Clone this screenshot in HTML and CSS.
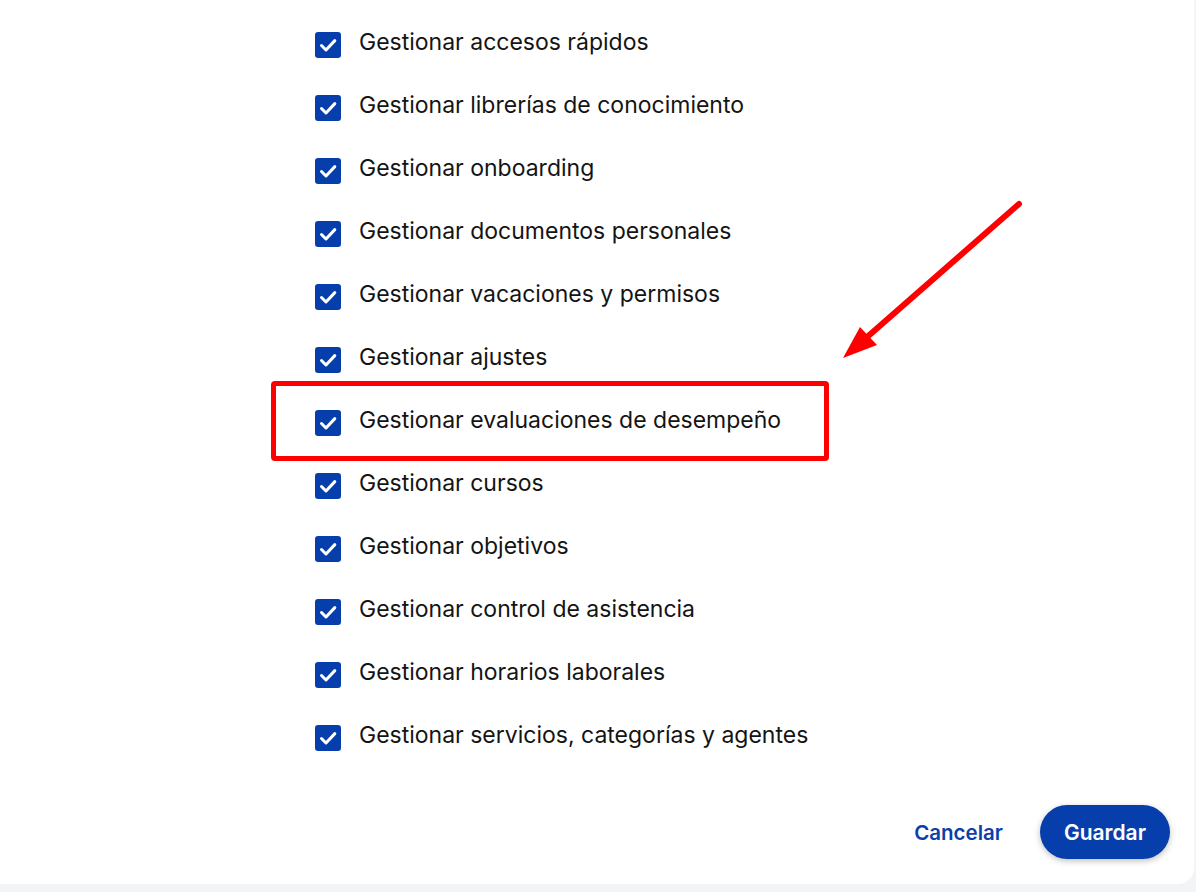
FILE: index.html
```html
<!DOCTYPE html>
<html lang="es">
<head>
    <meta charset="UTF-8">
    <meta name="viewport" content="width=device-width, initial-scale=1.0">
    <title>Permisos</title>
    <link rel="stylesheet" href="styles.css">
</head>
<body>
    <div class="panel">
        <ul class="perm-list">
            <li class="perm"><span class="check"><svg viewBox="0 0 26 26"><path d="M6.5 13.5 L11 18 L19.8 8.6"/></svg></span><span class="label">Gestionar accesos rápidos</span></li>
            <li class="perm"><span class="check"><svg viewBox="0 0 26 26"><path d="M6.5 13.5 L11 18 L19.8 8.6"/></svg></span><span class="label">Gestionar librerías de conocimiento</span></li>
            <li class="perm"><span class="check"><svg viewBox="0 0 26 26"><path d="M6.5 13.5 L11 18 L19.8 8.6"/></svg></span><span class="label">Gestionar onboarding</span></li>
            <li class="perm"><span class="check"><svg viewBox="0 0 26 26"><path d="M6.5 13.5 L11 18 L19.8 8.6"/></svg></span><span class="label">Gestionar documentos personales</span></li>
            <li class="perm"><span class="check"><svg viewBox="0 0 26 26"><path d="M6.5 13.5 L11 18 L19.8 8.6"/></svg></span><span class="label">Gestionar vacaciones y permisos</span></li>
            <li class="perm"><span class="check"><svg viewBox="0 0 26 26"><path d="M6.5 13.5 L11 18 L19.8 8.6"/></svg></span><span class="label">Gestionar ajustes</span></li>
            <li class="perm highlighted"><span class="check"><svg viewBox="0 0 26 26"><path d="M6.5 13.5 L11 18 L19.8 8.6"/></svg></span><span class="label">Gestionar evaluaciones de desempeño</span></li>
            <li class="perm"><span class="check"><svg viewBox="0 0 26 26"><path d="M6.5 13.5 L11 18 L19.8 8.6"/></svg></span><span class="label">Gestionar cursos</span></li>
            <li class="perm"><span class="check"><svg viewBox="0 0 26 26"><path d="M6.5 13.5 L11 18 L19.8 8.6"/></svg></span><span class="label">Gestionar objetivos</span></li>
            <li class="perm"><span class="check"><svg viewBox="0 0 26 26"><path d="M6.5 13.5 L11 18 L19.8 8.6"/></svg></span><span class="label">Gestionar control de asistencia</span></li>
            <li class="perm"><span class="check"><svg viewBox="0 0 26 26"><path d="M6.5 13.5 L11 18 L19.8 8.6"/></svg></span><span class="label">Gestionar horarios laborales</span></li>
            <li class="perm"><span class="check"><svg viewBox="0 0 26 26"><path d="M6.5 13.5 L11 18 L19.8 8.6"/></svg></span><span class="label">Gestionar servicios, categorías y agentes</span></li>
        </ul>
        <div class="actions">
            <button type="button" class="btn-text">Cancelar</button>
            <button type="button" class="btn-primary">Guardar</button>
        </div>
        <!-- annotation arrow -->
        <svg class="arrow" viewBox="0 0 210 180">
            <line x1="199" y1="14" x2="46" y2="148"/>
            <polygon points="23,168 40,137 57,155"/>
        </svg>
    </div>
</body>
</html>
```

FILE: styles.css
```css
body { margin: 0; background: #f3f4f6; font-family: Inter, "Noto Sans", sans-serif; }
.panel { position: relative; width: 1194px; height: 884px; background: #fff; border-bottom-right-radius: 16px; box-sizing: border-box; display: flex; flex-direction: column; }
.perm-list { list-style: none; margin: 0; padding: 13px 0 0 315px; }
.perm { position: relative; display: flex; align-items: center; height: 63px; font-size: 23px; color: #141414; }
.label { padding-bottom: 6px; }
.check { width: 26px; height: 26px; border-radius: 3px; background: #063fac; margin-right: 18px; display: flex; }
.check svg { width: 26px; height: 26px; fill: none; stroke: #fff; stroke-width: 3; stroke-linecap: round; stroke-linejoin: round; }
.highlighted::before { content: ""; position: absolute; left: -44px; top: -10px; width: 548px; height: 70px; border: 5px solid #ff0000; border-radius: 4px; }
.actions { margin-top: auto; display: flex; justify-content: flex-end; align-items: center; gap: 25px; padding: 0 24px 25px 0; }
.btn-text { background: none; border: none; font-family: inherit; font-size: 20.5px; font-weight: 600; color: #0a3fac; padding: 10px 12px; cursor: pointer; }
.btn-primary { height: 54px; padding: 0 24px; border: none; border-radius: 27px; background: #063fac; color: #fff; font-family: inherit; font-size: 21px; font-weight: 600; box-shadow: 0 2px 6px rgba(0, 0, 0, 0.25); cursor: pointer; }
.arrow { position: absolute; left: 820px; top: 190px; width: 210px; height: 180px; }
.arrow line { stroke: #ff0000; stroke-width: 6; stroke-linecap: round; }
.arrow polygon { fill: #ff0000; }
```
